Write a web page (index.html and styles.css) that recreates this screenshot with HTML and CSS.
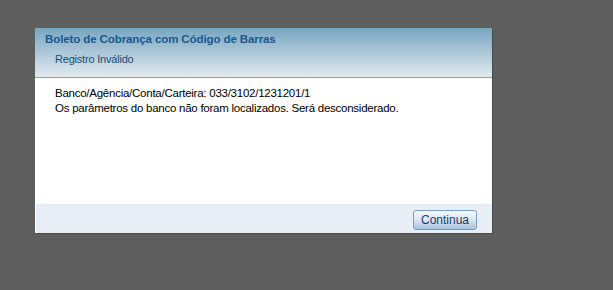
FILE: index.html
```html
<!DOCTYPE html>
<html lang="pt">
<head>
  <meta charset="UTF-8" />
  <title>Boleto de Cobrança</title>
  <link rel="stylesheet" href="styles.css">
</head>
<body>

<div class="dialog">
  <div class="dialog-head">
    <h1>Boleto de Cobrança com Código de Barras</h1>
    <div class="sub">Registro Inválido</div>
  </div>
  <div class="dialog-body">
    <p>Banco/Agência/Conta/Carteira: 033/3102/1231201/1</p>
    <p>Os parâmetros do banco não foram localizados. Será desconsiderado.</p>
  </div>
  <div class="dialog-foot">
    <button class="btn">Continua</button>
  </div>
</div>

</body>
</html>
```

FILE: styles.css
```css
body { margin: 0; padding: 28px 0 0 35px; background: #5e5e5e; font-family: "Liberation Sans", Arial, sans-serif; }
.dialog { width: 457px; background: #fff; border-radius: 3px 3px 0 0; box-shadow: 1px 1px 0 #4a4a4a; }
.dialog-head { height: 50px; padding: 4px 0 0 10px; box-sizing: border-box; background: linear-gradient(#78a5c1, #e1eaef); border-bottom: 1px solid #9a9a9a; border-radius: 3px 3px 0 0; }
.dialog-head h1 { margin: 0; font-size: 11.5px; font-weight: bold; letter-spacing: -0.1px; color: #17588f; line-height: 15px; }
.dialog-head .sub { margin: 5px 0 0 10px; font-size: 11px; letter-spacing: -0.2px; color: #1d4b72; line-height: 15px; }
.dialog-body { height: 126px; padding: 8px 20px 0; box-sizing: border-box; }
.dialog-body p { margin: 0; font-size: 11.5px; letter-spacing: -0.25px; line-height: 15px; color: #000; }
.dialog-foot { height: 29px; margin: 0 0 2px 1px; background: #e8eef5; display: flex; justify-content: flex-end; align-items: center; padding-right: 15px; }
.btn { width: 64px; height: 20px; padding: 0; border: 1px solid #7e9cbc; border-radius: 3px; background: linear-gradient(#f4f8fc, #dbe6f1 50%, #a9c0d9); color: #173c6c; font-size: 12px; font-family: "Liberation Sans", Arial, sans-serif; margin-top: 3px; }
```
